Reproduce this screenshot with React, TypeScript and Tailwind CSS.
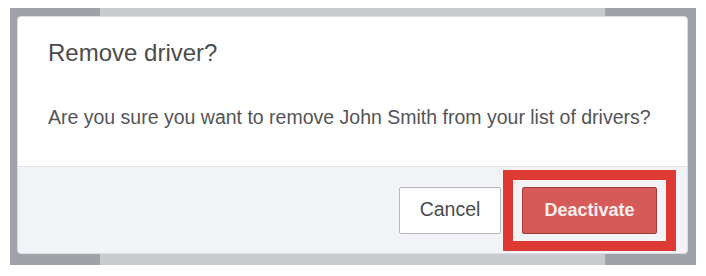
export default function App() {
  return (
    <div className="h-[276px] w-[706px] bg-white pt-[8px] pl-[10px] font-['Liberation_Sans',Arial,sans-serif]">
      <div className="relative h-[257px] w-[686px]">
        {/* page behind the dialog */}
        <div className="flex h-full w-full">
          <div className="w-[90px] bg-[#a0a2a9]" />
          <div className="flex-1 bg-[#c9cacd]" />
          <div className="w-[91px] bg-[#a0a2a9]" />
        </div>

        {/* dialog */}
        <div className="absolute left-[7px] top-[8px] flex h-[238px] w-[671px] flex-col rounded-[4px] border border-[#dcdde2] bg-white">
          <div className="h-[149px] px-[30px] pt-[22px]">
            <h2 className="text-[24px] leading-[28px] text-[#4b4b4d]">Remove driver?</h2>
            <p className="mt-[38px] text-[19.5px] leading-[24px] text-[#545457]">
              Are you sure you want to remove John Smith from your list of drivers?
            </p>
          </div>
          <div className="flex flex-1 items-center justify-end gap-[21px] rounded-b-[4px] border-t border-[#e3e4e9] bg-[#f2f3f7] pr-[30px]">
            <button className="h-[47px] w-[102px] rounded-[2px] border border-[#b5b7bc] bg-white text-[19.5px] text-[#4a4a4c]">
              Cancel
            </button>
            <div className="relative">
              <span className="absolute -inset-x-[19px] -inset-y-[17px] border-[10px] border-[#dc3a32]" />
              <button className="relative h-[47px] w-[135px] rounded-[2px] border border-[#a4393a] bg-[#d65b58] text-[18px] font-bold text-[#fbeeee]">
                Deactivate
              </button>
            </div>
          </div>
        </div>
      </div>
    </div>
  );
}
